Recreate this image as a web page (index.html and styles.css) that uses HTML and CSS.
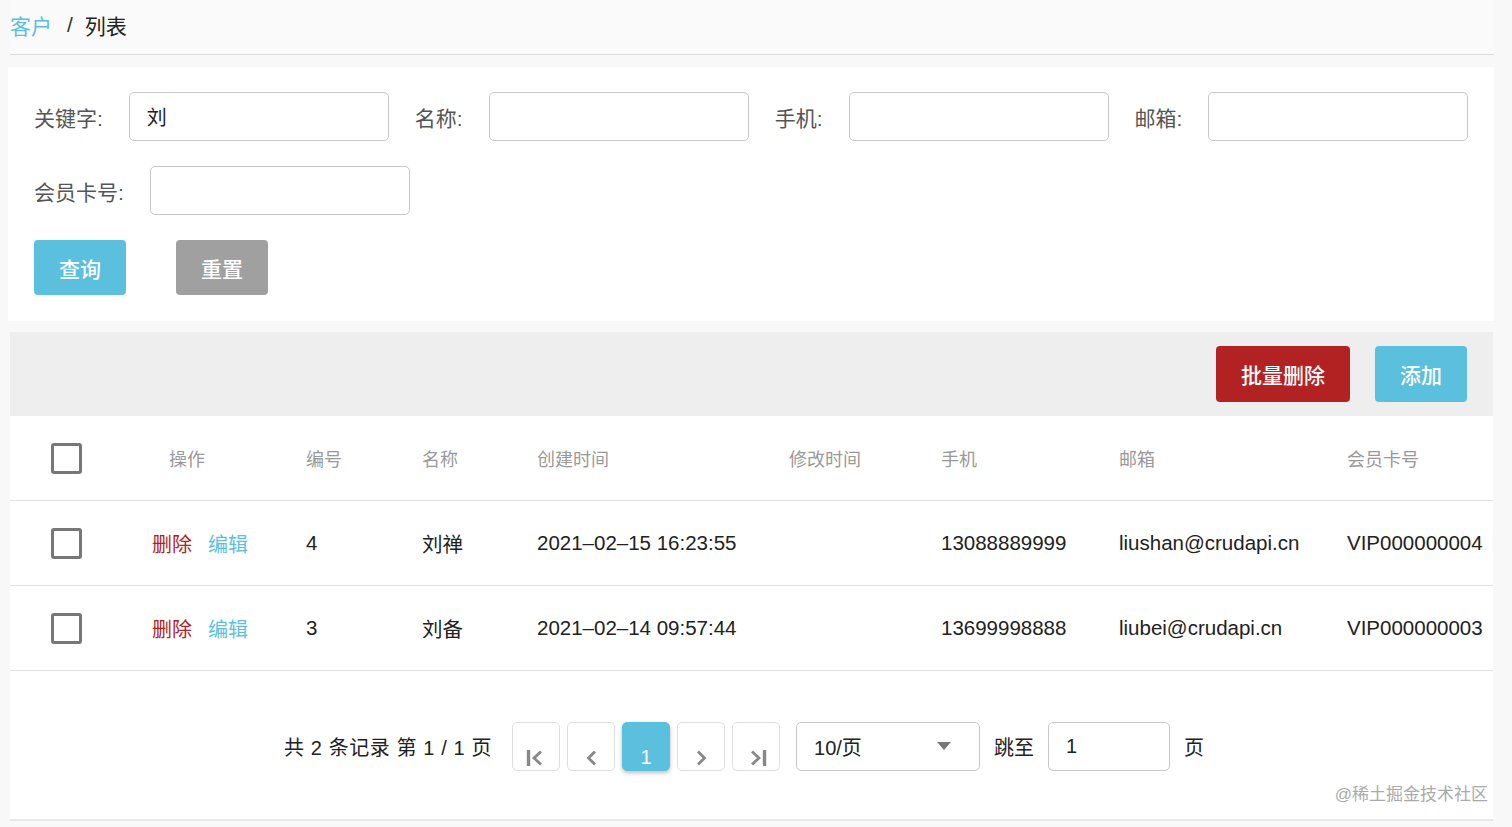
FILE: index.html
```html
<!DOCTYPE html>
<html lang="zh-CN">
<head>
    <meta charset="UTF-8">
    <meta name="viewport" content="width=device-width, initial-scale=1.0">
    <title>客户列表</title>
    <link rel="stylesheet" href="styles.css">
</head>
<body>
    <div class="breadcrumb">
        <a class="crumb-link" href="#">客户</a>
        <span class="crumb-sep">/</span>
        <span class="crumb-current">列表</span>
    </div>

    <div class="search-panel">
        <div class="search-row">
            <label class="field-label">关键字:</label>
            <input class="field-input" type="text" value="刘">
            <label class="field-label">名称:</label>
            <input class="field-input" type="text">
            <label class="field-label">手机:</label>
            <input class="field-input" type="text">
            <label class="field-label">邮箱:</label>
            <input class="field-input" type="text">
        </div>
        <div class="search-row">
            <label class="field-label">会员卡号:</label>
            <input class="field-input" type="text">
        </div>
        <div class="search-row buttons">
            <button class="btn btn-info">查询</button>
            <button class="btn btn-gray">重置</button>
        </div>
    </div>

    <div class="table-panel">
        <div class="toolbar">
            <button class="btn btn-danger">批量删除</button>
            <button class="btn btn-info">添加</button>
        </div>

        <div class="grid-row head">
            <div class="cell"><span class="checkbox"></span></div>
            <div class="cell op-head">操作</div>
            <div class="cell">编号</div>
            <div class="cell">名称</div>
            <div class="cell">创建时间</div>
            <div class="cell">修改时间</div>
            <div class="cell">手机</div>
            <div class="cell">邮箱</div>
            <div class="cell">会员卡号</div>
        </div>
        <div class="grid-row">
            <div class="cell"><span class="checkbox"></span></div>
            <div class="cell"><a class="link-del" href="#">删除</a><a class="link-edit" href="#">编辑</a></div>
            <div class="cell">4</div>
            <div class="cell">刘禅</div>
            <div class="cell">2021–02–15 16:23:55</div>
            <div class="cell"></div>
            <div class="cell">13088889999</div>
            <div class="cell">liushan@crudapi.cn</div>
            <div class="cell">VIP000000004</div>
        </div>
        <div class="grid-row">
            <div class="cell"><span class="checkbox"></span></div>
            <div class="cell"><a class="link-del" href="#">删除</a><a class="link-edit" href="#">编辑</a></div>
            <div class="cell">3</div>
            <div class="cell">刘备</div>
            <div class="cell">2021–02–14 09:57:44</div>
            <div class="cell"></div>
            <div class="cell">13699998888</div>
            <div class="cell">liubei@crudapi.cn</div>
            <div class="cell">VIP000000003</div>
        </div>

        <div class="pager-area">
            <div class="pager">
                <span class="pager-info">共 2 条记录 第 1 / 1 页</span>
                <button class="page-btn first">
                    <svg width="21" height="18" viewBox="0 0 21 18"><path d="M2.5 1v16" stroke="#888" stroke-width="3.4" fill="none"/><path d="M15 2.5L8 9L15 15.5" stroke="#888" stroke-width="2.8" fill="none"/></svg>
                </button>
                <button class="page-btn">
                    <svg width="13" height="18" viewBox="0 0 13 18"><path d="M10 2.5L3.5 9L10 15.5" stroke="#888" stroke-width="2.8" fill="none"/></svg>
                </button>
                <button class="page-btn active">1</button>
                <button class="page-btn">
                    <svg width="13" height="18" viewBox="0 0 13 18"><path d="M3 2.5L9.5 9L3 15.5" stroke="#888" stroke-width="2.8" fill="none"/></svg>
                </button>
                <button class="page-btn last">
                    <svg width="21" height="18" viewBox="0 0 21 18"><path d="M6 2.5L13 9L6 15.5" stroke="#888" stroke-width="2.8" fill="none"/><path d="M18.5 1v16" stroke="#888" stroke-width="3.4" fill="none"/></svg>
                </button>
                <div class="page-size">
                    <span>10/页</span>
                    <span class="caret"></span>
                </div>
                <span class="jump-label">跳至</span>
                <input class="jump-input" type="text" value="1">
                <span class="jump-label">页</span>
            </div>
            <div class="watermark">@稀土掘金技术社区</div>
        </div>
    </div>
</body>
</html>
```

FILE: styles.css
```css
body {
    margin: 0;
    background-color: #f8f8f8;
    font-family: "Liberation Sans", "Noto Sans CJK SC", sans-serif;
    color: #222;
}
button {
    font-family: inherit;
}
.breadcrumb {
    display: flex;
    align-items: center;
    height: 49px;
    margin: 0 18px 0 10px;
    border-bottom: 1px solid #dcdcdc;
    background-color: #fafafa;
    font-size: 21px;
    padding-bottom: 5px;
}
.crumb-link {
    color: #5bc0de;
    text-decoration: none;
}
.crumb-sep {
    margin: 0 12px 0 15px;
    color: #333;
}
.crumb-current {
    color: #222;
}
.search-panel {
    margin: 12px 18px 0 8px;
    padding: 25px 26px 26px;
    background-color: #fff;
    display: flex;
    flex-direction: column;
    gap: 25px;
}
.search-row {
    display: flex;
    align-items: center;
}
.field-label {
    font-size: 21px;
    color: #555;
    margin-right: 26px;
    white-space: nowrap;
    flex-shrink: 0;
}
.field-input {
    flex-shrink: 0;
    width: 260px;
    height: 49px;
    box-sizing: border-box;
    border: 1.5px solid #c8c8c8;
    border-radius: 5px;
    padding: 0 17px;
    font-size: 20px;
    font-family: inherit;
    color: #222;
    margin-right: 26px;
    outline: none;
}
.search-row.buttons {
    gap: 50px;
}
.btn {
    height: 55px;
    padding: 0 25px;
    border: none;
    border-radius: 4px;
    color: #fff;
    font-size: 21px;
    font-weight: 500;
    cursor: pointer;
}
.btn-info {
    background-color: #5bc0de;
}
.btn-gray {
    background-color: #a0a0a0;
}
.btn-danger {
    background-color: #b22222;
}
.table-panel {
    margin: 11px 19px 0 10px;
    background-color: #fff;
    border-bottom: 2px solid #e8e8e8;
}
.toolbar {
    height: 84px;
    background-color: #eeeeee;
    display: flex;
    justify-content: flex-end;
    align-items: center;
    gap: 25px;
    padding-right: 26px;
}
.toolbar .btn {
    height: 56px;
}
.toolbar .btn-danger {
    padding: 0 25px;
}
.grid-row {
    display: grid;
    grid-template-columns: 142px 154px 116px 115px 252px 152px 178px 228px 146px;
    height: 84px;
    border-bottom: 1.5px solid #e2e2e2;
    font-size: 20.5px;
}
.grid-row.head {
    font-size: 18px;
    color: #999;
}
.cell {
    display: flex;
    align-items: center;
    white-space: nowrap;
}
.op-head {
    padding-left: 17px;
}
.checkbox {
    display: block;
    width: 31px;
    height: 31px;
    box-sizing: border-box;
    border: 3px solid #777;
    border-radius: 3px;
    margin-left: 51px;
}
.grid-row .cell:first-child {
    margin-left: -10px;
}
.link-del {
    color: #b22222;
    text-decoration: none;
    font-size: 20px;
    margin-right: 16px;
}
.link-edit {
    color: #5bc0de;
    text-decoration: none;
    font-size: 20px;
}
.pager-area {
    height: 148px;
    display: flex;
    flex-direction: column;
}
.pager {
    display: flex;
    align-items: center;
    padding-left: 274px;
    margin-top: 51px;
    height: 48px;
    font-size: 20px;
}
.pager-info {
    margin-right: 20px;
    letter-spacing: 0.6px;
}
.page-btn {
    flex-shrink: 0;
    width: 48px;
    height: 49px;
    box-sizing: border-box;
    border: 1px solid #dedede;
    border-radius: 5px;
    background-color: #fff;
    margin-right: 7px;
    padding: 0 0 3px;
    display: flex;
    align-items: flex-end;
    justify-content: center;
}
.page-btn.active {
    background-color: #5bc0de;
    border-color: #5bc0de;
    color: #fff;
    font-size: 20px;
    font-weight: normal;
    box-shadow: 0 2px 4px rgba(0, 0, 0, 0.25);
    padding-bottom: 1px;
}
.page-btn.last {
    margin-right: 16px;
}
.page-size {
    flex-shrink: 0;
    width: 184px;
    height: 49px;
    box-sizing: border-box;
    border: 1.5px solid #c8c8c8;
    border-radius: 5px;
    display: flex;
    align-items: center;
    justify-content: space-between;
    padding: 0 28px 0 17px;
    margin-right: 14px;
}
.caret {
    width: 0;
    height: 0;
    border-left: 7px solid transparent;
    border-right: 7px solid transparent;
    border-top: 8px solid #777;
}
.jump-label {
    margin-right: 14px;
}
.jump-input {
    flex-shrink: 0;
    width: 122px;
    height: 49px;
    box-sizing: border-box;
    border: 1.5px solid #c8c8c8;
    border-radius: 5px;
    padding: 0 17px;
    font-size: 20px;
    font-family: inherit;
    color: #222;
    margin-right: 14px;
    outline: none;
}
.watermark {
    align-self: flex-end;
    margin: 10px 5px 0 0;
    font-size: 17px;
    color: #aaa;
}
```
